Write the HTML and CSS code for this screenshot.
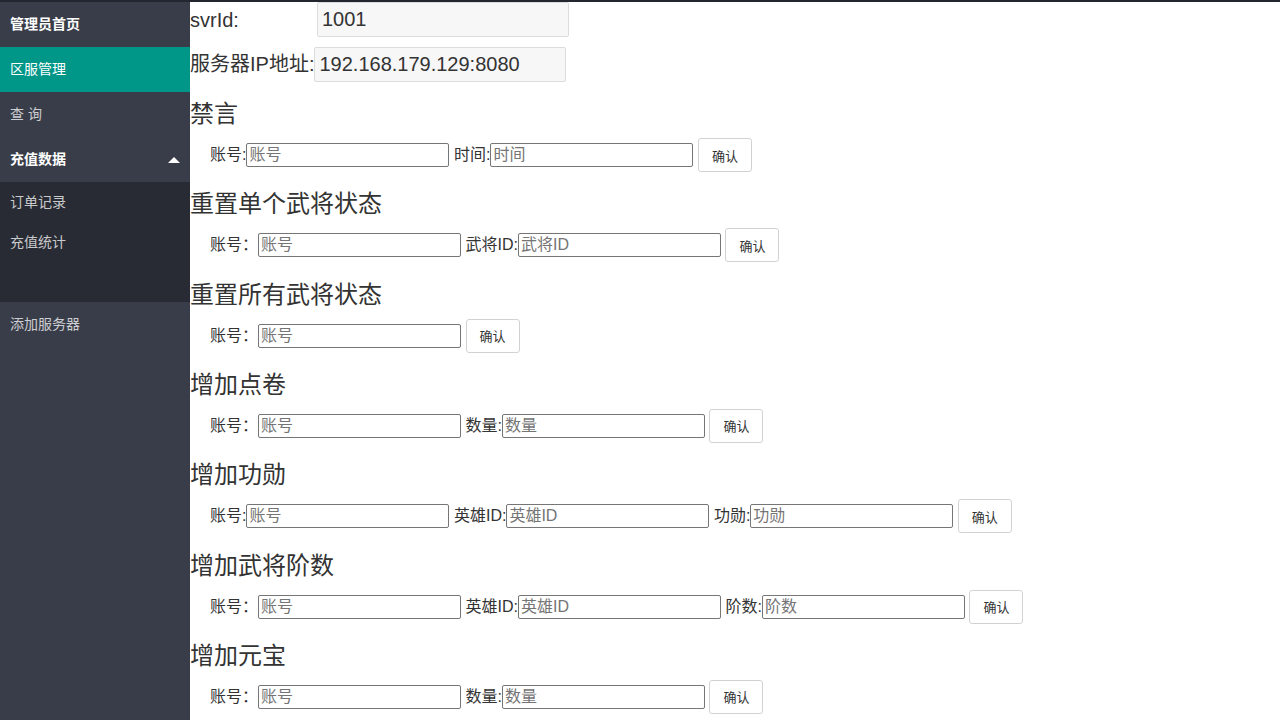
FILE: index.html
```html
<!DOCTYPE html>
<html lang="zh-CN">
<head>
<meta charset="utf-8">
<title>区服管理</title>
<link rel="stylesheet" href="styles.css">
</head>
<body>
<div class="topbar"></div>
<div class="layout">
  <nav class="side">
    <a class="nav-item strong">管理员首页</a>
    <a class="nav-item active">区服管理</a>
    <a class="nav-item">查 询</a>
    <a class="nav-item strong has-child">充值数据<span class="arrow"></span></a>
    <div class="child">
      <a class="child-item">订单记录</a>
      <a class="child-item">充值统计</a>
      <a class="child-item"></a>
    </div>
    <a class="nav-item">添加服务器</a>
  </nav>
  <main class="main">
    <div class="info-row first">
      <span class="info-label wide">svrId:</span>
      <input class="info-input" type="text" value="1001" readonly>
    </div>
    <div class="info-row second">
      <span class="info-label">服务器IP地址:</span>
      <input class="info-input" type="text" value="192.168.179.129:8080" readonly>
    </div>

    <section class="block">
      <h3 class="title">禁言</h3>
      <div class="form-row">
        <label class="lbl">账号:</label><input class="field" placeholder="账号">
        <label class="lbl sp">时间:</label><input class="field" placeholder="时间">
        <button class="btn">确认</button>
      </div>
    </section>

    <section class="block">
      <h3 class="title">重置单个武将状态</h3>
      <div class="form-row">
        <label class="lbl">账号：</label><input class="field" placeholder="账号">
        <label class="lbl sp">武将ID:</label><input class="field" placeholder="武将ID">
        <button class="btn">确认</button>
      </div>
    </section>

    <section class="block">
      <h3 class="title">重置所有武将状态</h3>
      <div class="form-row">
        <label class="lbl">账号：</label><input class="field" placeholder="账号">
        <button class="btn">确认</button>
      </div>
    </section>

    <section class="block">
      <h3 class="title">增加点卷</h3>
      <div class="form-row">
        <label class="lbl">账号：</label><input class="field" placeholder="账号">
        <label class="lbl sp">数量:</label><input class="field" placeholder="数量">
        <button class="btn">确认</button>
      </div>
    </section>

    <section class="block">
      <h3 class="title">增加功勋</h3>
      <div class="form-row">
        <label class="lbl">账号:</label><input class="field" placeholder="账号">
        <label class="lbl sp">英雄ID:</label><input class="field" placeholder="英雄ID">
        <label class="lbl sp">功勋:</label><input class="field" placeholder="功勋">
        <button class="btn">确认</button>
      </div>
    </section>

    <section class="block">
      <h3 class="title">增加武将阶数</h3>
      <div class="form-row">
        <label class="lbl">账号：</label><input class="field" placeholder="账号">
        <label class="lbl sp">英雄ID:</label><input class="field" placeholder="英雄ID">
        <label class="lbl sp">阶数:</label><input class="field" placeholder="阶数">
        <button class="btn">确认</button>
      </div>
    </section>

    <section class="block">
      <h3 class="title">增加元宝</h3>
      <div class="form-row">
        <label class="lbl">账号：</label><input class="field" placeholder="账号">
        <label class="lbl sp">数量:</label><input class="field" placeholder="数量">
        <button class="btn">确认</button>
      </div>
    </section>
  </main>
</div>
</body>
</html>
```
FILE: styles.css
```css
html, body {
  margin: 0;
  padding: 0;
  height: 100%;
  overflow: hidden;
  background: #fff;
  font-family: "Liberation Sans", "Noto Sans CJK SC", sans-serif;
  color: #333;
}
.topbar {
  height: 2px;
  background: #23262e;
}
.layout {
  display: flex;
  height: 718px;
}
.side {
  width: 190px;
  flex: 0 0 190px;
  background: #393d49;
  display: flex;
  flex-direction: column;
}
.nav-item {
  box-sizing: border-box;
  display: flex;
  align-items: center;
  height: 45px;
  padding: 0 0 4px 10px;
  font-size: 14px;
  color: rgba(255, 255, 255, 0.75);
  position: relative;
}
.nav-item.strong {
  color: #fff;
  font-weight: bold;
}
.nav-item.active {
  background: #009688;
  color: #fff;
}
.arrow {
  position: absolute;
  left: 168px;
  top: 20px;
  width: 0;
  height: 0;
  border-left: 6px solid transparent;
  border-right: 6px solid transparent;
  border-bottom: 6px solid #fff;
}
.child {
  background: #282b33;
  display: flex;
  flex-direction: column;
}
.child-item {
  box-sizing: border-box;
  display: flex;
  align-items: center;
  height: 40px;
  padding: 0 0 2px 10px;
  font-size: 14px;
  color: rgba(255, 255, 255, 0.75);
}
.main {
  flex: 1;
}
.info-row {
  display: flex;
  align-items: center;
  font-size: 20px;
}
.info-row.first {
  height: 35px;
  margin-bottom: 10px;
}
.info-row.second {
  height: 34px;
  margin-bottom: 15px;
}
.info-label {
  line-height: 24px;
}
.info-label.wide {
  width: 127px;
}
.info-input {
  box-sizing: border-box;
  width: 252px;
  height: 35px;
  border: 1px solid #dcdcdc;
  border-radius: 2px;
  background: #f7f7f7;
  padding: 0 0 0 4px;
  font-family: "Liberation Sans", "Noto Sans CJK SC", sans-serif;
  font-size: 20px;
  color: #333;
  outline: none;
}
.block {
  margin-bottom: 14.33px;
}
.title {
  margin: 0 0 8px 0;
  height: 34px;
  line-height: 36px;
  font-size: 24px;
  font-weight: normal;
  color: #333;
}
.form-row {
  display: flex;
  align-items: center;
  height: 34px;
  padding-left: 20px;
  font-size: 16px;
}
.lbl {
  line-height: 20px;
  color: #333;
}
.lbl.sp {
  margin-left: 4.5px;
}
.field {
  box-sizing: border-box;
  width: 203px;
  height: 24px;
  border: 1px solid #767676;
  border-radius: 2px;
  padding: 1px 2px;
  font-family: "Liberation Sans", "Noto Sans CJK SC", sans-serif;
  font-size: 16px;
  color: #333;
  background: #fff;
}
.field::placeholder {
  color: #757575;
}
.btn {
  box-sizing: border-box;
  margin-left: 4.5px;
  width: 54px;
  height: 34px;
  border: 1px solid #d2d2d2;
  border-radius: 3px;
  background: #fff;
  font-family: "Liberation Sans", "Noto Sans CJK SC", sans-serif;
  font-size: 13px;
  color: #333;
  padding: 0;
}
```
